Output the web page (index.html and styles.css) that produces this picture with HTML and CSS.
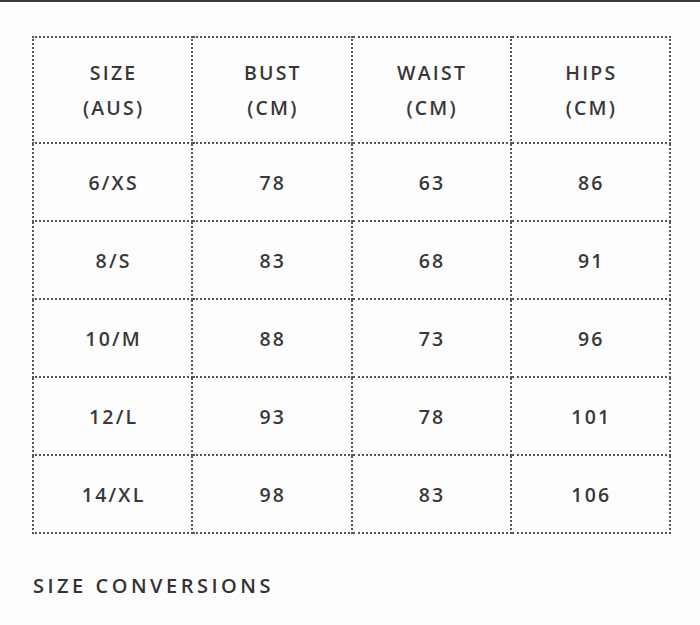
FILE: index.html
```html
<!DOCTYPE html>
<html lang="en">
<head>
<meta charset="utf-8">
<title>Size Chart</title>
<link rel="stylesheet" href="styles.css">
</head>
<body>
<div class="topbar"></div>
<main class="page">
  <table class="chart">
    <thead>
      <tr>
        <th>SIZE<br>(AUS)</th>
        <th>BUST<br>(CM)</th>
        <th>WAIST<br>(CM)</th>
        <th>HIPS<br>(CM)</th>
      </tr>
    </thead>
    <tbody>
      <tr><td>6/XS</td><td>78</td><td>63</td><td>86</td></tr>
      <tr><td>8/S</td><td>83</td><td>68</td><td>91</td></tr>
      <tr><td>10/M</td><td>88</td><td>73</td><td>96</td></tr>
      <tr><td>12/L</td><td>93</td><td>78</td><td>101</td></tr>
      <tr><td>14/XL</td><td>98</td><td>83</td><td>106</td></tr>
    </tbody>
  </table>
  <h2 class="heading">SIZE CONVERSIONS</h2>
</main>
</body>
</html>
```

FILE: styles.css
```css
html, body {
  margin: 0;
  padding: 0;
  background: #fdfdfd;
}
body {
  font-family: "Open Sans", "Liberation Sans", sans-serif;
  color: #383838;
}
.topbar {
  height: 2px;
  background: #3c3c3c;
}
.page {
  padding: 34px 0 0 32px;
}
.chart {
  border-collapse: collapse;
  table-layout: fixed;
  width: 639px;
}
.chart th,
.chart td {
  border: 2px dotted #555;
  text-align: center;
  vertical-align: middle;
  font-size: 19.5px;
  font-weight: 600;
  letter-spacing: 2.2px;
  padding: 0 0 0 2px;
}
.chart th {
  height: 104px;
  line-height: 35px;
}
.chart td {
  height: 76px;
}
.heading {
  margin: 38px 0 0 1px;
  font-size: 20px;
  font-weight: 600;
  letter-spacing: 3.5px;
  color: #333;
}
```
